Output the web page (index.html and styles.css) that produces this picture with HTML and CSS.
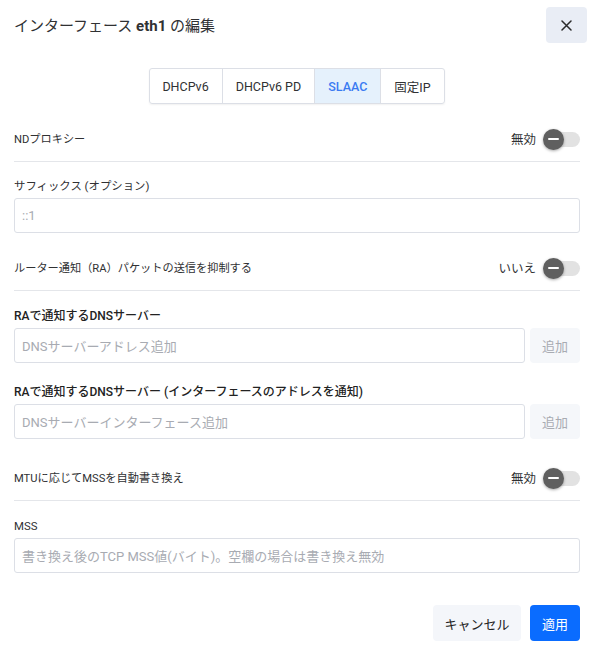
FILE: index.html
```html
<!DOCTYPE html>
<html lang="ja">
<head>
<meta charset="utf-8">
<title>インターフェース eth1 の編集</title>
<link rel="stylesheet" href="styles.css">
</head>
<body>
<div class="dialog">
  <div class="header">
    <div class="title">インターフェース <b>eth1</b> の編集</div>
    <button class="close" aria-label="閉じる">
      <svg width="11" height="11" viewBox="0 0 11 11"><path d="M1 1L10 10M10 1L1 10" stroke="#2b2b2b" stroke-width="1.5" stroke-linecap="round"/></svg>
    </button>
  </div>

  <div class="tabs-wrap">
    <div class="tabs">
      <div class="tab">DHCPv6</div>
      <div class="tab">DHCPv6 PD</div>
      <div class="tab active">SLAAC</div>
      <div class="tab">固定IP</div>
    </div>
  </div>

  <div class="switch-row first">
    <span class="row-label">NDプロキシー</span>
    <span class="switch-side"><span class="state">無効</span><span class="toggle"><span class="knob"></span></span></span>
  </div>

  <div class="field f-suffix">
    <div class="label">サフィックス (オプション)</div>
    <div class="input"><span class="ph">::1</span></div>
  </div>

  <div class="switch-row ra">
    <span class="row-label">ルーター通知（RA）パケットの送信を抑制する</span>
    <span class="switch-side"><span class="state">いいえ</span><span class="toggle"><span class="knob"></span></span></span>
  </div>

  <div class="field f-dns">
    <div class="label strong">RAで通知するDNSサーバー</div>
    <div class="input-group">
      <div class="input"><span class="ph">DNSサーバーアドレス追加</span></div>
      <button class="add">追加</button>
    </div>
  </div>

  <div class="field f-dns2">
    <div class="label strong">RAで通知するDNSサーバー (インターフェースのアドレスを通知)</div>
    <div class="input-group">
      <div class="input"><span class="ph">DNSサーバーインターフェース追加</span></div>
      <button class="add">追加</button>
    </div>
  </div>

  <div class="switch-row mtu">
    <span class="row-label">MTUに応じてMSSを自動書き換え</span>
    <span class="switch-side"><span class="state">無効</span><span class="toggle"><span class="knob"></span></span></span>
  </div>

  <div class="field f-mss">
    <div class="label">MSS</div>
    <div class="input"><span class="ph">書き換え後のTCP MSS値(バイト)。空欄の場合は書き換え無効</span></div>
  </div>

  <div class="footer">
    <button class="btn cancel">キャンセル</button>
    <button class="btn apply">適用</button>
  </div>
</div>
</body>
</html>
```

FILE: styles.css
```css
* { box-sizing: border-box; }
html, body { margin: 0; padding: 0; background: #fff; }
body {
  font-family: Roboto, "Noto Sans CJK JP", sans-serif;
  color: #303133;
  font-size: 12px;
}
button { font-family: inherit; border: 0; cursor: pointer; }

.dialog { width: 594px; padding: 0 14px; }

.header {
  height: 49px;
  display: flex;
  align-items: center;
  justify-content: space-between;
}
.title { font-size: 15px; color: #303133; }
.title b { font-weight: 700; }
.close {
  width: 41px;
  height: 36px;
  margin-right: -7px;
  margin-top: 1px;
  background: #e9edf5;
  border-radius: 4px;
  display: flex;
  align-items: center;
  justify-content: center;
  padding: 0;
}

.tabs-wrap { display: flex; justify-content: center; margin-top: 19px; }
.tabs {
  display: flex;
  border: 1px solid #dcdfe6;
  border-radius: 3px;
  box-shadow: 0 1px 2px rgba(0,0,0,0.06);
  overflow: hidden;
}
.tab {
  height: 34px;
  display: flex;
  align-items: center;
  padding: 0 13px;
  font-size: 12.5px;
  color: #303133;
  border-left: 1px solid #dcdfe6;
}
.tab:first-child { border-left: 0; padding: 0 13px 0 12px; }
.tab.active { background: #e5f1fc; color: #3a7bf2; font-weight: 500; }

.switch-row {
  height: 36px;
  padding-bottom: 11px;
  border-bottom: 1px solid #e4e6ea;
  display: flex;
  align-items: center;
  justify-content: space-between;
}
.switch-row.first { margin-top: 22px; }
.switch-row.ra { margin-top: 22px; }
.switch-row.mtu { margin-top: 26px; }
.row-label { font-size: 11.2px; color: #303133; }
.switch-side { display: flex; align-items: center; }
.state { font-size: 12.5px; color: #303133; margin-right: 8px; }
.toggle {
  position: relative;
  width: 36px;
  height: 15px;
  border-radius: 8px;
  background: #e2e2e2;
  margin-top: 2px;
}
.knob {
  position: absolute;
  left: -1px;
  top: -3px;
  width: 21px;
  height: 21px;
  border-radius: 50%;
  background: #5f5f5f;
  box-shadow: 0 1px 3px rgba(0,0,0,0.35);
}
.knob::after {
  content: "";
  position: absolute;
  left: 5px;
  top: 9px;
  width: 11px;
  height: 2.5px;
  border-radius: 1px;
  background: #fff;
}

.field { margin-top: 17px; }
.field.f-suffix { margin-top: 16px; }
.field.f-dns2 { margin-top: 21px; }
.label {
  height: 16px;
  line-height: 16px;
  font-size: 11.4px;
  color: #303133;
  margin-bottom: 4px;
}
.label.strong { font-size: 12px; font-weight: 500; color: #222; }
.input {
  height: 35px;
  border: 1px solid #dcdfe6;
  border-radius: 3px;
  display: flex;
  align-items: center;
  padding: 0 7px;
  flex: 1;
}
.ph { font-size: 13px; color: #a8abb2; white-space: nowrap; }
.input-group { display: flex; gap: 5px; }
.add {
  width: 50px;
  height: 35px;
  background: #f5f7fa;
  color: #a8abb2;
  border-radius: 4px;
  font-size: 13px;
  padding: 0;
}

.footer {
  margin-top: 32px;
  display: flex;
  justify-content: flex-end;
  gap: 9px;
}
.btn {
  height: 36px;
  border-radius: 4px;
  font-size: 13px;
  padding: 0 11px;
}
.cancel { background: #f4f6fa; color: #222; width: 88px; }
.apply { background: #0a6cff; color: #fff; width: 50px; padding: 0; }
```
